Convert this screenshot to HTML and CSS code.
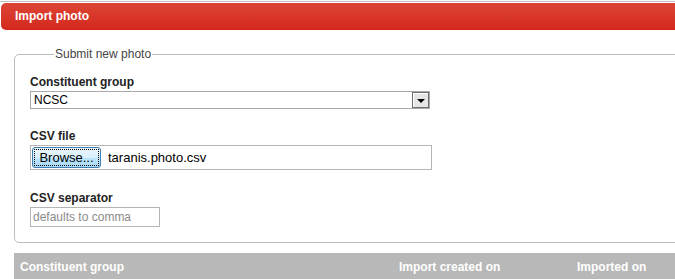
FILE: index.html
```html
<!DOCTYPE html>
<html lang="en">
  <head>
    <meta charset="UTF-8" />
    <title>Import photo</title>
    <link rel="stylesheet" href="styles.css">
  </head>
  <body>
    <div class="page">
      <div class="panel-title">Import photo</div>

      <div class="content">
        <fieldset class="submit-box">
          <legend>Submit new photo</legend>

          <div class="form-group">
            <label for="group">Constituent group</label>
            <div class="select-box" id="group">
              <span class="select-value">NCSC</span>
              <span class="select-arrow"></span>
            </div>
          </div>

          <div class="form-group">
            <label for="csvFile">CSV file</label>
            <div class="file-box" id="csvFile">
              <button class="browse-btn"><span>Browse...</span></button>
              <span class="file-name">taranis.photo.csv</span>
            </div>
          </div>

          <div class="form-group">
            <label for="separator">CSV separator</label>
            <input type="text" id="separator" class="sep-input" placeholder="defaults to comma" />
          </div>
        </fieldset>

        <table class="imports">
          <thead>
            <tr>
              <th class="col-group">Constituent group</th>
              <th class="col-created">Import created on</th>
              <th class="col-imported">Imported on</th>
            </tr>
          </thead>
        </table>
      </div>
    </div>
  </body>
</html>
```

FILE: styles.css
```css
html,
body {
  margin: 0;
  overflow: hidden;
  background: #fff;
}
body {
  font-family: Arial, "Liberation Sans", sans-serif;
  font-size: 12px;
  color: #222;
}
.page {
  margin-top: 1px;
  border-top: 1px solid #c2c2c2;
  width: 720px;
}
.panel-title {
  margin: 1px 0 0 1px;
  height: 27px;
  line-height: 27px;
  padding-left: 14px;
  border-radius: 5px 0 0 5px;
  background: linear-gradient(#dd4536, #d3281c);
  color: #fff;
  font-weight: bold;
  font-size: 12px;
}
.content {
  padding-left: 14px;
  padding-top: 17px;
}
.submit-box {
  margin: 0;
  padding: 14px 15px 15px 15px;
  border: 1px solid #bdbdbd;
  border-radius: 5px;
}
.submit-box legend {
  margin-left: 24px;
  padding: 0 1px;
  color: #444;
  font-size: 12px;
}
.form-group {
  display: flex;
  flex-direction: column;
  align-items: flex-start;
  margin-bottom: 20px;
}
.form-group:nth-of-type(2) {
  margin-bottom: 21px;
}
.form-group:last-child {
  margin-bottom: 0;
}
.form-group label {
  font-weight: bold;
  font-size: 12px;
  line-height: 14px;
  margin-bottom: 2px;
  color: #222;
}
.select-box {
  display: flex;
  align-items: center;
  justify-content: space-between;
  box-sizing: border-box;
  width: 400px;
  height: 18px;
  border: 1px solid #a9a9a9;
  padding-left: 3px;
}
.select-value {
  font-size: 12px;
  color: #000;
}
.select-arrow {
  position: relative;
  box-sizing: border-box;
  width: 17px;
  height: 16px;
  border: 1px solid #6e6e6e;
  background: #e6e6e6;
  box-shadow: inset 1px 1px 0 #fff;
}
.select-arrow::after {
  content: "";
  position: absolute;
  left: 4px;
  top: 6px;
  border-left: 4px solid transparent;
  border-right: 4px solid transparent;
  border-top: 4px solid #000;
}
.file-box {
  display: flex;
  align-items: center;
  box-sizing: border-box;
  width: 402px;
  height: 25px;
  border: 1px solid #b5b5b5;
  padding-left: 1px;
}
.browse-btn {
  box-sizing: border-box;
  width: 69px;
  height: 21px;
  padding: 2px;
  border: 1px solid #3c7fb1;
  border-radius: 3px;
  background: linear-gradient(#eaf6fd 0%, #d9f0fc 50%, #bee6fd 51%, #a7d9f5 100%);
  font-family: Arial, "Liberation Sans", sans-serif;
  font-size: 13px;
  color: #000;
}
.browse-btn span {
  display: block;
  height: 15px;
  line-height: 15px;
  outline: 1px dotted #000;
}
.file-name {
  margin-left: 7px;
  font-size: 13px;
  color: #000;
}
.sep-input {
  box-sizing: border-box;
  width: 130px;
  height: 20px;
  margin: 0;
  padding: 0 2px;
  border: 1px solid #b5b5b5;
  font-family: Arial, "Liberation Sans", sans-serif;
  font-size: 12px;
}
.sep-input::placeholder {
  color: #8a8a8a;
}
.imports {
  margin-top: 10px;
  width: 700px;
  border-collapse: collapse;
}
.imports th {
  background-color: #b8b8b8;
  color: #fff;
  font-weight: bold;
  font-size: 12px;
  text-align: left;
  height: 27px;
  padding: 0 0 0 6px;
}
.col-group {
  width: 373px;
}
.col-created {
  width: 172px;
}
```
